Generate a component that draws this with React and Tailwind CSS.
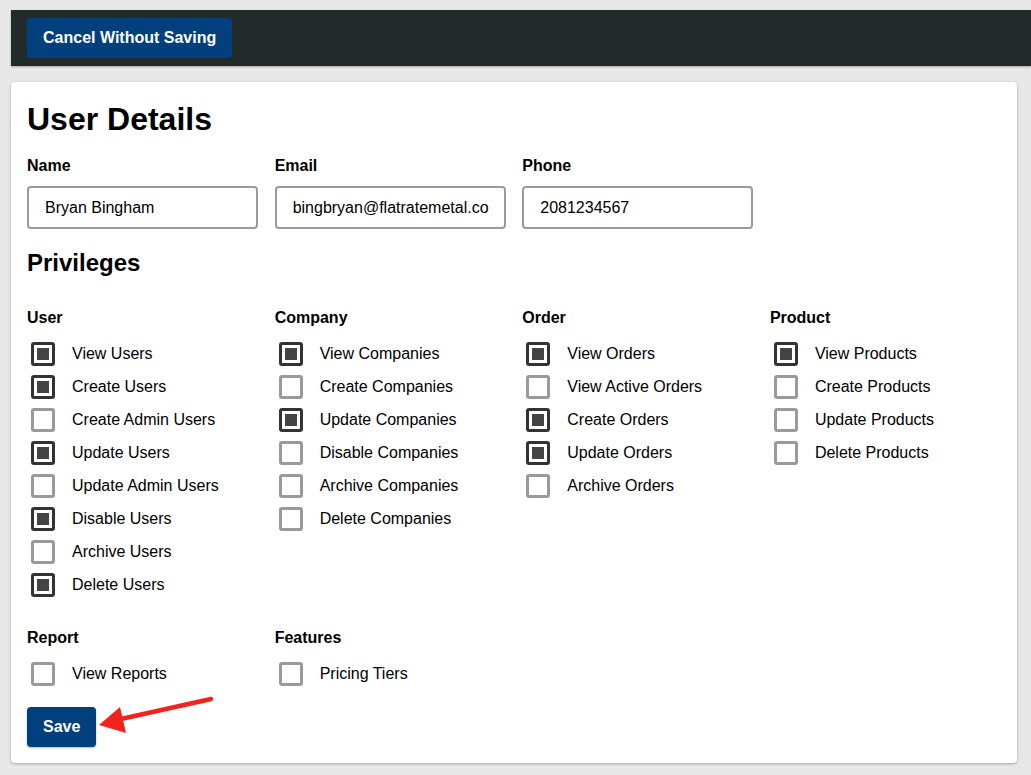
import React from 'react';

const groups = [
  {
    title: 'User',
    items: [
      ['View Users', true],
      ['Create Users', true],
      ['Create Admin Users', false],
      ['Update Users', true],
      ['Update Admin Users', false],
      ['Disable Users', true],
      ['Archive Users', false],
      ['Delete Users', true],
    ],
  },
  {
    title: 'Company',
    items: [
      ['View Companies', true],
      ['Create Companies', false],
      ['Update Companies', true],
      ['Disable Companies', false],
      ['Archive Companies', false],
      ['Delete Companies', false],
    ],
  },
  {
    title: 'Order',
    items: [
      ['View Orders', true],
      ['View Active Orders', false],
      ['Create Orders', true],
      ['Update Orders', true],
      ['Archive Orders', false],
    ],
  },
  {
    title: 'Product',
    items: [
      ['View Products', true],
      ['Create Products', false],
      ['Update Products', false],
      ['Delete Products', false],
    ],
  },
];

const extraGroups = [
  { title: 'Report', items: [['View Reports', false]] },
  { title: 'Features', items: [['Pricing Tiers', false]] },
];

const Checkbox = ({ checked }) =>
  checked ? (
    <span className="ml-1 flex h-6 w-6 shrink-0 items-center justify-center rounded-[3px] border-[3px] border-[#333333] bg-white">
      <span className="h-3 w-3 bg-[#444444]" />
    </span>
  ) : (
    <span className="ml-1 h-6 w-6 shrink-0 rounded-[3px] border-[3px] border-[#9a9a9a] bg-white" />
  );

const Group = ({ title, items }) => (
  <div>
    <h3 className="text-base leading-5 font-bold">{title}</h3>
    <div className="mt-[9px]">
      {items.map(([label, checked]) => (
        <div key={label} className="flex h-[33px] items-center">
          <Checkbox checked={checked} />
          <span className="ml-[17px] text-base">{label}</span>
        </div>
      ))}
    </div>
  </div>
);

const Field = ({ label, value }) => (
  <div>
    <label className="block text-base leading-5 font-bold">{label}</label>
    <div className="mt-[10px] flex h-[43px] items-center overflow-hidden rounded-[4px] border-2 border-[#9a9a9a] px-4 text-base whitespace-nowrap">
      {value}
    </div>
  </div>
);

export default function App() {
  return (
    <div
      className="min-h-[775px] bg-[#e8e8e8] pt-[10px] text-black"
      style={{ fontFamily: '"Liberation Sans", Arial, sans-serif' }}
    >
      <div className="ml-[11px] flex h-14 items-center bg-[#222b2a] pl-4 shadow-[0_1px_2px_rgba(0,0,0,0.3)]">
        <button className="h-10 rounded-[4px] bg-[#023f7d] px-4 text-base font-bold text-white">
          Cancel Without Saving
        </button>
      </div>

      <div className="relative mx-[11px] mt-4 mr-[14px] rounded-[4px] bg-white px-4 pt-[17px] pb-4 shadow-[0_1px_3px_rgba(0,0,0,0.3)]">
        <h1 className="text-[32px] leading-10 font-bold">User Details</h1>

        <div className="mt-[17px] grid grid-cols-4 gap-x-[16.5px]">
          <Field label="Name" value="Bryan Bingham" />
          <Field label="Email" value="bingbryan@flatratemetal.co" />
          <Field label="Phone" value="2081234567" />
        </div>

        <h2 className="mt-[19px] text-2xl leading-[30px] font-bold">Privileges</h2>

        <div className="mt-[30px] grid grid-cols-4 gap-x-[16.5px]">
          {groups.map((g) => (
            <Group key={g.title} {...g} />
          ))}
        </div>

        <div className="mt-[27px] grid grid-cols-4 gap-x-[16.5px]">
          {extraGroups.map((g) => (
            <Group key={g.title} {...g} />
          ))}
        </div>

        <button className="mt-[17px] h-10 rounded-[4px] bg-[#023f7d] px-4 text-base font-bold text-white shadow-[0_1px_2px_rgba(0,0,0,0.3)]">
          Save
        </button>

        {/* red annotation arrow */}
        <svg className="pointer-events-none absolute left-[84px] top-[608px]" width="130" height="50" viewBox="0 0 130 50">
          <line x1="116" y1="9" x2="26" y2="29" stroke="#f2231c" strokeWidth="4.5" strokeLinecap="round" />
          <polygon points="4,35 25,17 31,43" fill="#f2231c" />
        </svg>
      </div>
    </div>
  );
}
